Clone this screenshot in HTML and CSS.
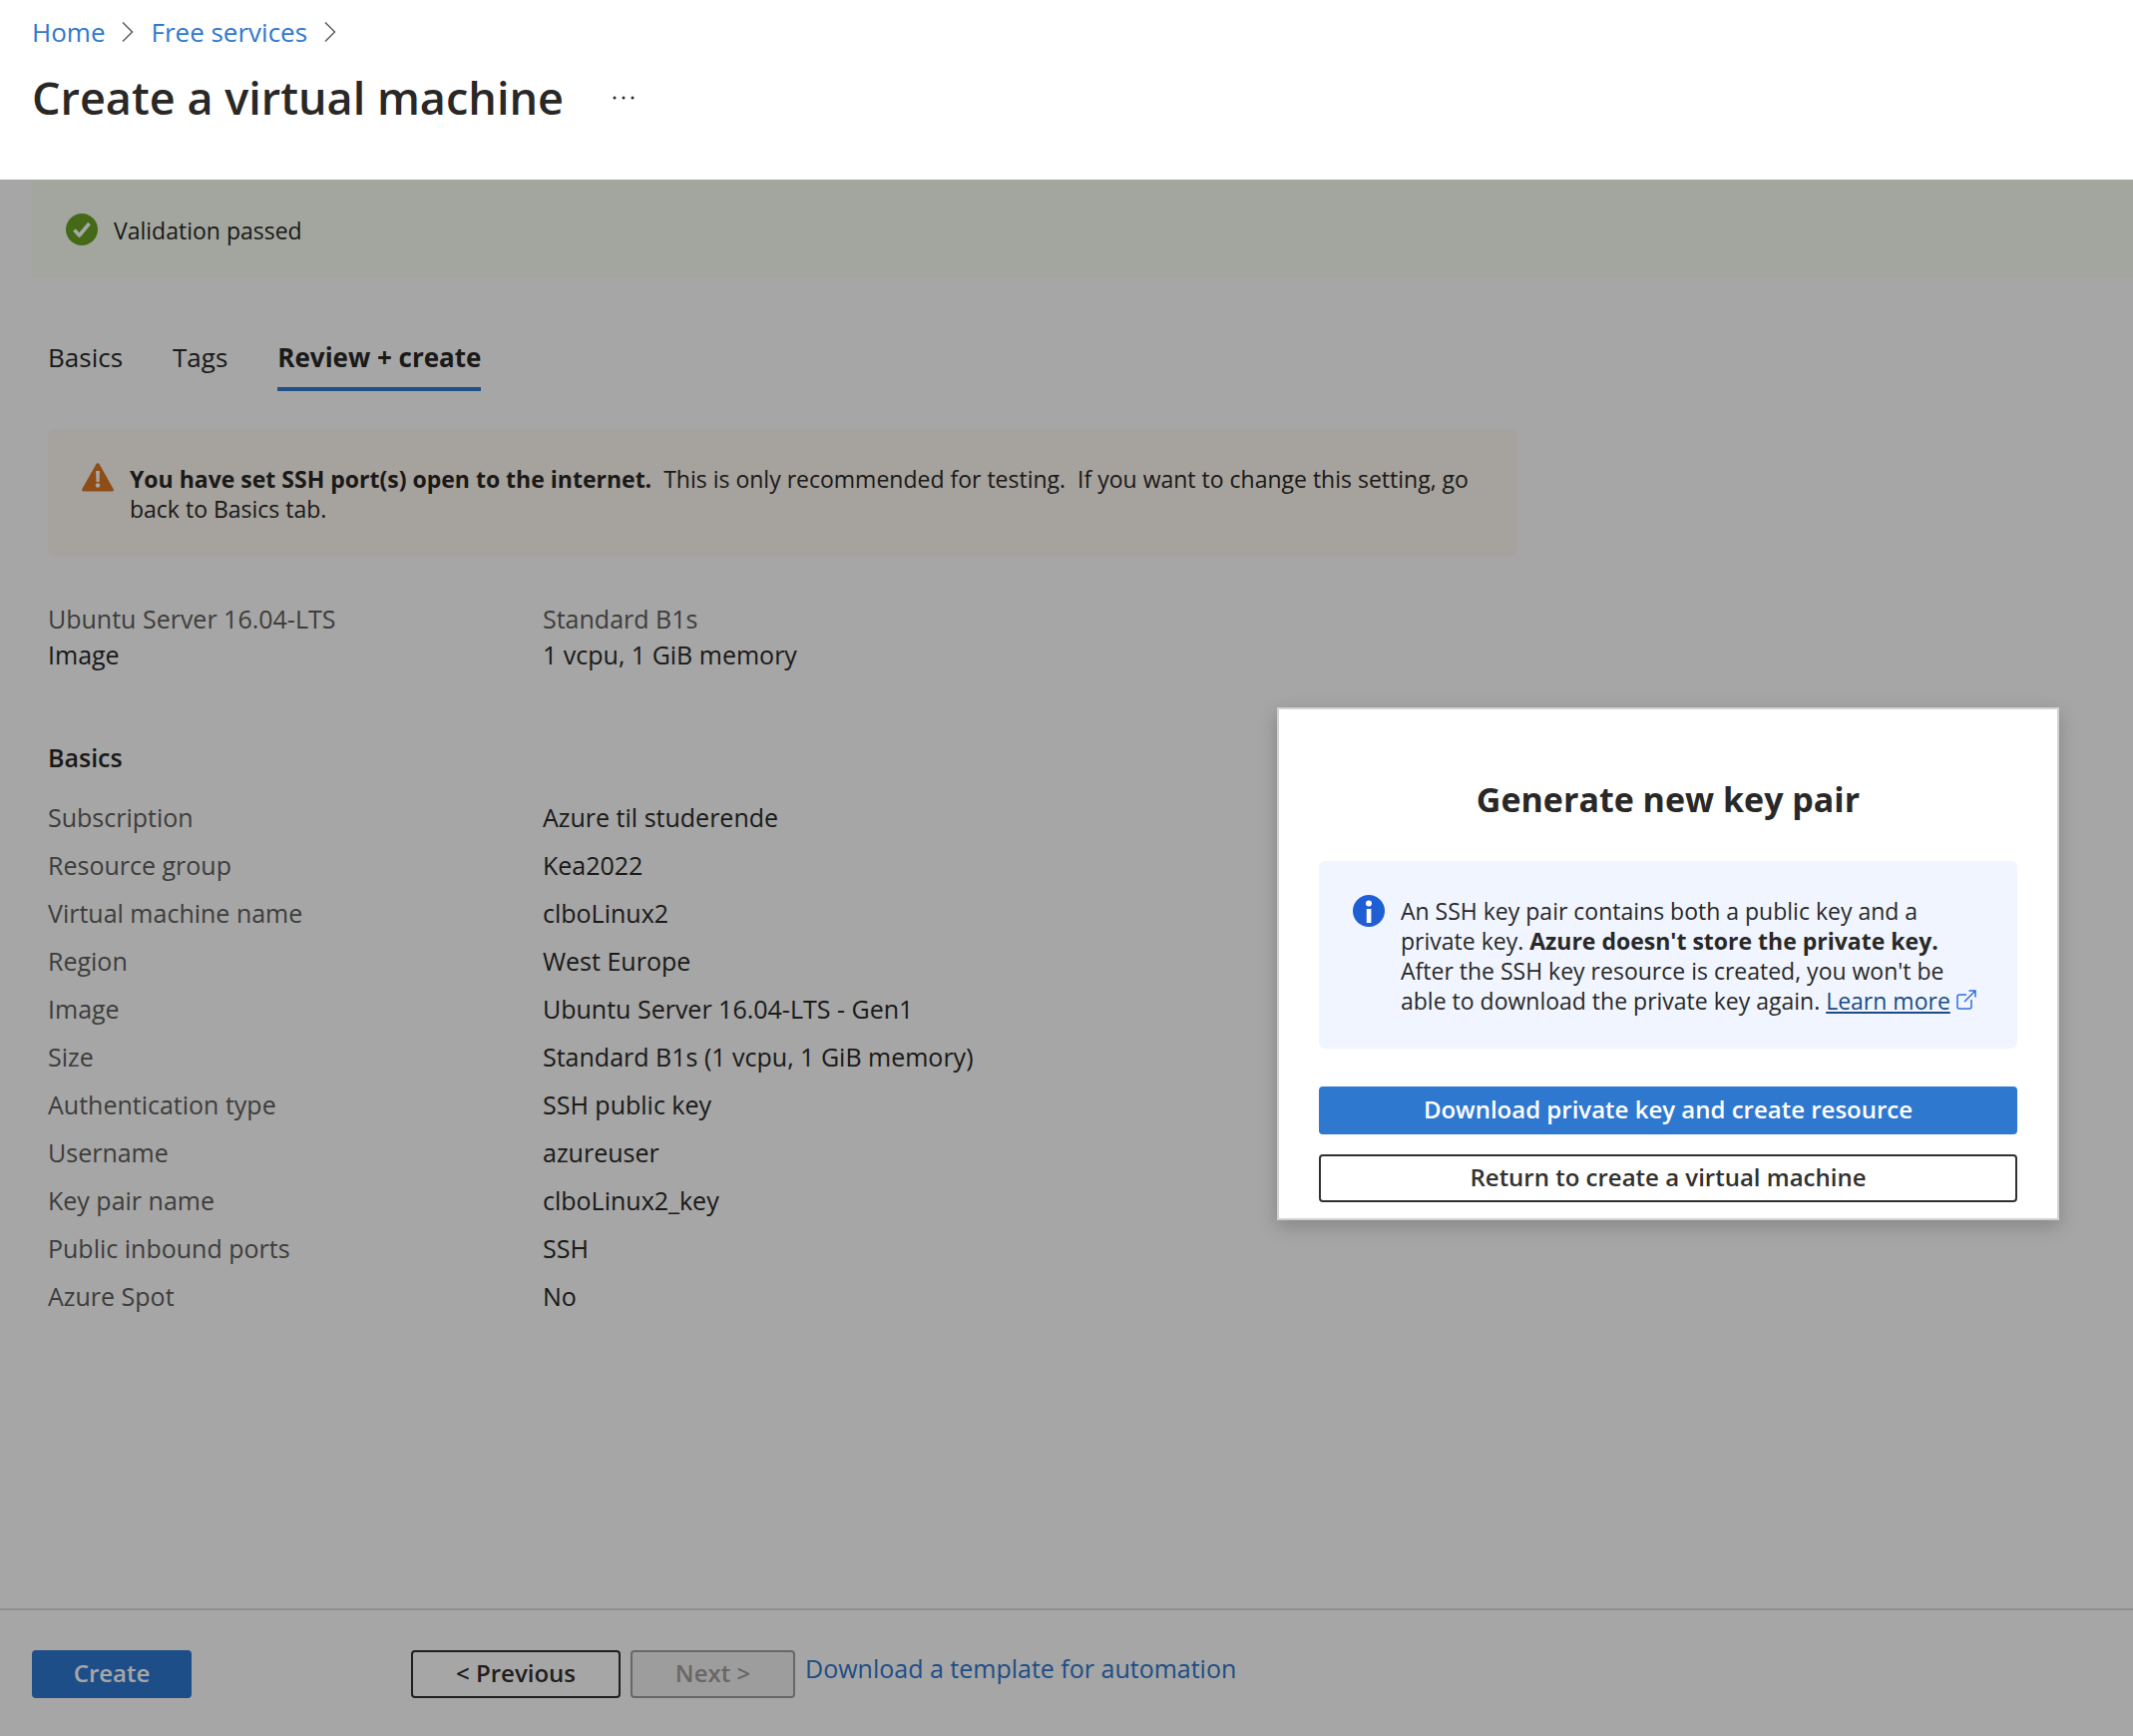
FILE: index.html
```html
<!DOCTYPE html>
<html lang="en">
<head>
<meta charset="utf-8">
<title>Create a virtual machine</title>
<link rel="stylesheet" href="styles.css">
</head>
<body>
<header class="header">
  <nav class="breadcrumb" aria-label="Breadcrumb">
    <a href="#">Home</a>
    <svg class="chevron" viewBox="0 0 12 20" aria-hidden="true"><path d="M1 0.5L10.5 10L1 19.5"/></svg>
    <a href="#">Free services</a>
    <svg class="chevron" viewBox="0 0 12 20" aria-hidden="true"><path d="M1 0.5L10.5 10L1 19.5"/></svg>
  </nav>
  <div class="title-row">
    <h1>Create a virtual machine</h1>
    <button class="more" type="button" aria-label="More actions">
      <svg viewBox="0 0 24 4" aria-hidden="true"><circle cx="3" cy="2" r="1.5"/><circle cx="12" cy="2" r="1.5"/><circle cx="21" cy="2" r="1.5"/></svg>
    </button>
  </div>
</header>

<div class="blade">
  <main class="content">
    <div class="banner" role="status">
      <svg class="icon" viewBox="0 0 32 32" aria-hidden="true"><circle cx="16" cy="16" r="16" fill="#69a325"/><path d="M8.500 16.500L13.500 22L23.500 10" fill="none" stroke="#fff" stroke-width="3.600" stroke-linejoin="round"/></svg>
      <span>Validation passed</span>
    </div>

    <nav class="tabs" aria-label="Steps">
      <a class="tab" href="#">Basics</a>
      <a class="tab" href="#">Tags</a>
      <a class="tab tab-active" href="#" aria-current="step">Review + create</a>
    </nav>

    <div class="warning">
      <svg class="icon" viewBox="0 0 32 32" aria-hidden="true"><path d="M14.200 1.500Q16 -1.500 17.800 1.500L31.600 26Q32.500 28.500 30 28.500H2Q-0.500 28.500 0.400 26Z" fill="#db7623"/><path d="M14 8H18L17.500 19H14.500Z" fill="#fff"/><circle cx="16" cy="22.500" r="2.200" fill="#fff"/></svg>
      <p><strong>You have set SSH port(s) open to the internet.</strong>&nbsp; This is only recommended for testing.&nbsp; If you want to change this setting, go back to Basics tab.</p>
    </div>

    <dl class="summary">
      <div><dt>Ubuntu Server 16.04-LTS</dt><dd>Image</dd></div>
      <div><dt>Standard B1s</dt><dd>1 vcpu, 1 GiB memory</dd></div>
    </dl>

    <h2 class="section-title" id="basics">Basics</h2>
    <table class="details" aria-labelledby="basics">
      <tbody>
        <tr><th scope="row">Subscription</th><td>Azure til studerende</td></tr>
        <tr><th scope="row">Resource group</th><td>Kea2022</td></tr>
        <tr><th scope="row">Virtual machine name</th><td>clboLinux2</td></tr>
        <tr><th scope="row">Region</th><td>West Europe</td></tr>
        <tr><th scope="row">Image</th><td>Ubuntu Server 16.04-LTS - Gen1</td></tr>
        <tr><th scope="row">Size</th><td>Standard B1s (1 vcpu, 1 GiB memory)</td></tr>
        <tr><th scope="row">Authentication type</th><td>SSH public key</td></tr>
        <tr><th scope="row">Username</th><td>azureuser</td></tr>
        <tr><th scope="row">Key pair name</th><td>clboLinux2_key</td></tr>
        <tr><th scope="row">Public inbound ports</th><td>SSH</td></tr>
        <tr><th scope="row">Azure Spot</th><td>No</td></tr>
      </tbody>
    </table>
  </main>

  <footer class="footer">
    <button class="btn btn-primary btn-create" type="button">Create</button>
    <div class="pager">
      <button class="btn btn-previous" type="button">&lt; Previous</button>
      <button class="btn btn-next" type="button" disabled>Next &gt;</button>
      <a class="template-link" href="#">Download a template for automation</a>
    </div>
  </footer>

  <div class="overlay"></div>

  <section class="dialog" role="dialog" aria-modal="true" aria-labelledby="dialog-title">
    <h2 id="dialog-title">Generate new key pair</h2>
    <div class="info">
      <svg class="icon" viewBox="0 0 32 32" aria-hidden="true"><circle cx="16" cy="16" r="16" fill="#205fd3"/><circle cx="16" cy="8.500" r="3" fill="#fff"/><rect x="13.800" y="14" width="4.600" height="14" fill="#fff"/></svg>
      <p>An SSH key pair contains both a public key and a private key. <strong>Azure doesn't store the private key.</strong> After the SSH key resource is created, you won't be able to download the private key again. <a href="#">Learn more</a> <svg class="external" viewBox="0 0 20 20" aria-hidden="true"><path d="M10 5H3Q1 5 1 7V17Q1 19 3 19H13Q15 19 15 17V10M12.500 1H19V7.500M19 1L8 12"/></svg></p>
    </div>
    <div class="actions">
      <button class="btn btn-primary" type="button">Download private key and create resource</button>
      <button class="btn" type="button">Return to create a virtual machine</button>
    </div>
  </section>
</div>
</body>
</html>
```
FILE: styles.css
```css
* {
  box-sizing: border-box;
}

body {
  margin: 0;
  min-height: 100vh;
  display: flex;
  flex-direction: column;
  background: #fff;
  color: #292827;
  font-family: "Segoe UI", "Open Sans", "Noto Sans", sans-serif;
  font-size: 25px;
  line-height: 36px;
}

h1, h2, p, dl, dd {
  margin: 0;
}

a {
  color: #2f78cf;
  text-decoration: none;
}

.header {
  height: 180px;
  padding: 14px 32px 0;
}

.breadcrumb {
  display: flex;
  align-items: center;
  gap: 17px;
  font-size: 26px;
}

.chevron {
  width: 12px;
  height: 20px;
  fill: none;
  stroke: #605e5c;
  stroke-width: 1.5;
}

.title-row {
  display: flex;
  align-items: center;
  gap: 48px;
  margin-top: 16px;
}

h1 {
  font-size: 45px;
  font-weight: 600;
  line-height: 64px;
}

.more {
  display: flex;
  padding: 0;
  border: 0;
  background: none;
}

.more svg {
  width: 24px;
  height: 4px;
  fill: #292827;
}

/* Blade body, dimmed while the dialog is open */
.blade {
  position: relative;
  flex: 1;
  display: flex;
  flex-direction: column;
}

.content {
  flex: 1;
}

.icon {
  flex: none;
  width: 32px;
  height: 32px;
}

.banner {
  display: flex;
  gap: 16px;
  margin-left: 32px;
  padding: 34px;
  height: 99px;
  background: #fafff3;
  font-size: 23px;
  line-height: 34px;
}

.tabs {
  display: flex;
  gap: 50px;
  margin: 61px 48px 0;
  font-size: 26px;
}

.tab {
  color: #292827;
  height: 52px;
}

.tab-active {
  font-weight: 700;
  border-bottom: 4px solid #337acf;
}

.warning,
.info {
  display: flex;
  gap: 16px;
  padding: 34px 34px 33px;
  border-radius: 6px;
  font-size: 23px;
  line-height: 30px;
}

.warning p,
.info p {
  padding-top: 1px;
}

.warning {
  max-width: 1473px;
  margin: 38px 48px 0;
  background: #fff9f2;
}

.summary {
  display: grid;
  grid-template-columns: 496px 1fr;
  margin: 44px 48px 0;
}

dt, th {
  color: #605e5c;
  font-weight: 400;
  text-align: left;
}

.section-title {
  margin: 67px 48px 0;
  font-size: 25px;
  font-weight: 600;
}

.details {
  margin: 18px 48px 0;
  border-collapse: collapse;
}

.details th,
.details td {
  height: 48px;
  padding: 0;
}

.details th {
  width: 496px;
}

.footer {
  display: flex;
  gap: 220px;
  padding: 40px 32px 38px;
  border-top: 2px solid #ddd;
}

.pager {
  display: flex;
  gap: 10px;
}

.btn {
  height: 48px;
  padding: 0 0 2px;
  border: 2px solid #323130;
  border-radius: 4px;
  background: #fff;
  color: #323130;
  font: 600 24px/36px "Segoe UI", "Open Sans", "Noto Sans", sans-serif;
}

.btn-primary {
  border-color: #2f78cf;
  background: #2f78cf;
  color: #fff;
}

.btn:disabled {
  border-color: #a19f9d;
  background: #f3f2f1;
  color: #a19f9d;
}

.btn-create {
  width: 160px;
}

.btn-previous {
  width: 210px;
}

.btn-next {
  width: 165px;
}

.overlay {
  position: absolute;
  inset: 0;
  background: rgba(0, 0, 0, 0.35);
}

.dialog {
  position: absolute;
  top: 529px;
  right: 74px;
  width: 784px;
  padding: 66px 40px 16px;
  border: 2px solid #d2d2d2;
  background: #fff;
  box-shadow: 0 6px 18px rgba(0, 0, 0, 0.2);
}

.dialog h2 {
  font-size: 34px;
  font-weight: 700;
  line-height: 48px;
  text-align: center;
}

.info {
  margin-top: 38px;
  background: #f0f5ff;
}

.info a {
  color: #1b4c87;
  text-decoration: underline;
}

.external {
  width: 20px;
  height: 20px;
  fill: none;
  stroke: #2f6fdb;
  stroke-width: 1.5;
}

.actions {
  display: grid;
  gap: 20px;
  margin-top: 38px;
}
```
